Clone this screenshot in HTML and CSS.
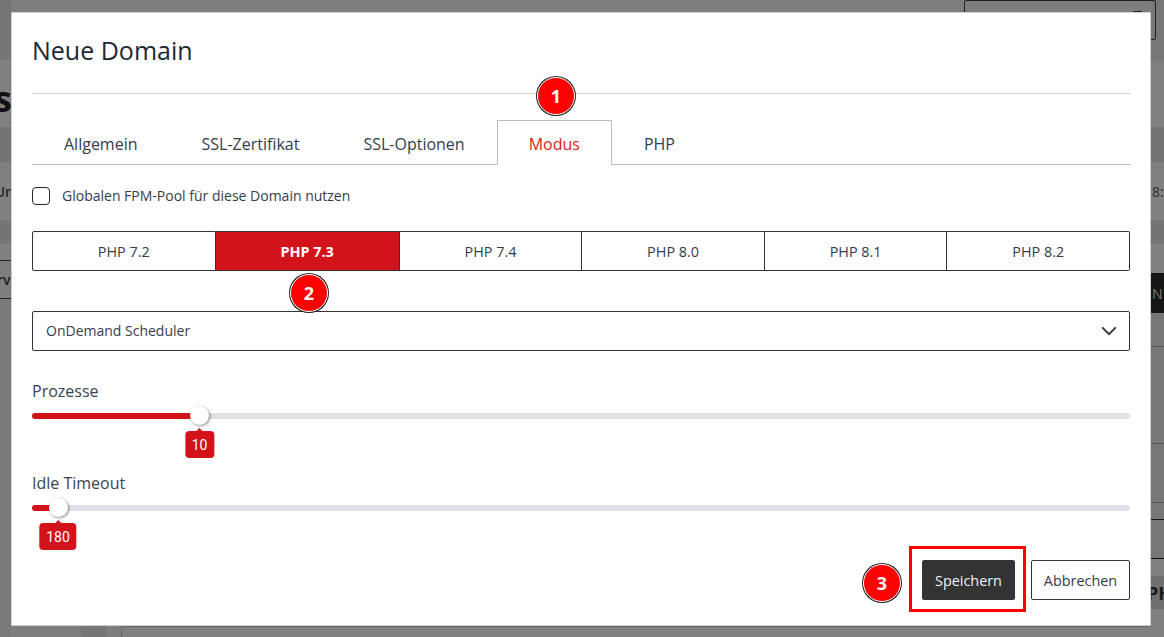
FILE: index.html
```html
<!DOCTYPE html>
<html lang="de">
<head>
<meta charset="utf-8">
<title>Neue Domain</title>
<link rel="stylesheet" href="styles.css">
</head>
<body>
<div class="backdrop">
  <div class="side side-left">
    <div class="bl b-a"><span class="big-s">s</span></div>
    <div class="bl b-b"></div>
    <div class="bl b-c"><span class="un">Un</span></div>
    <div class="bl b-d"></div>
    <div class="bl b-e"></div>
    <div class="bl b-f"><span class="rv">rve</span></div>
    <div class="bl b-g"></div>
  </div>
  <div class="center">
    <div class="top-box"><span class="top-dash"></span></div>
    <div class="bottom-strip"><span class="strip-dark"></span><span class="strip-panel"></span></div>
  </div>
  <div class="side side-right">
    <div class="br r-a"></div>
    <div class="br r-b"></div>
    <div class="br r-c"></div>
    <div class="br r-d"><span class="eight">8:</span></div>
    <div class="br r-e"></div>
    <div class="br r-f"></div>
    <div class="br r-g"><span class="n">N</span></div>
    <div class="br r-h"></div>
    <div class="br r-i"></div>
    <div class="br r-j"></div>
    <div class="br r-k"></div>
    <div class="br r-l"></div>
    <div class="br r-m"><span class="ph">PH</span></div>
    <div class="br r-n"></div>
  </div>
</div>

<div class="modal">
  <header class="modal-head"><h1 class="modal-title">Neue Domain</h1></header>
  <nav class="tabs">
    <a class="tab">Allgemein</a>
    <a class="tab">SSL-Zertifikat</a>
    <a class="tab">SSL-Optionen</a>
    <a class="tab tab-active">Modus</a>
    <a class="tab">PHP</a>
  </nav>
  <label class="check-row"><span class="check"></span><span class="check-text">Globalen FPM-Pool für diese Domain nutzen</span></label>
  <div class="btn-group">
    <button class="seg">PHP 7.2</button>
    <button class="seg seg-on">PHP 7.3</button>
    <button class="seg">PHP 7.4</button>
    <button class="seg">PHP 8.0</button>
    <button class="seg">PHP 8.1</button>
    <button class="seg">PHP 8.2</button>
  </div>
  <div class="select">
    <span class="select-text">OnDemand Scheduler</span>
    <svg class="chevron" width="16" height="10" viewBox="0 0 16 10"><path d="M1.2 1.4 8 8.2l6.8-6.8" fill="none" stroke="#343a40" stroke-width="2"/></svg>
  </div>
  <div class="field field-first">
    <div class="field-label">Prozesse</div>
    <div class="track"><div class="fill" style="width:167.5px"><span class="thumb"></span><span class="bubble">10</span></div></div>
  </div>
  <div class="field field-second">
    <div class="field-label">Idle Timeout</div>
    <div class="track"><div class="fill" style="width:26px"><span class="thumb"></span><span class="bubble">180</span></div></div>
  </div>
  <footer class="modal-foot">
    <button class="btn btn-dark">Speichern<span class="highlight"></span></button>
    <button class="btn btn-light">Abbrechen</button>
  </footer>
  <span class="badge badge-1">1</span>
  <span class="badge badge-2">2</span>
  <span class="badge badge-3">3</span>
</div>
</body>
</html>
```

FILE: styles.css
```css
* { box-sizing: border-box; }
html, body { margin: 0; height: 100%; overflow: hidden; }
body { font-family: "Open Sans", "Noto Sans", sans-serif; color: #343a40; background: #808080; }

/* dimmed page behind the dialog */
.backdrop { display: flex; height: 637px; width: 1164px; background: #7e7e7e; }
.side { overflow: hidden; flex: none; display: flex; flex-direction: column; font-weight: 600; color: #1d1f22; }
.side-left { width: 11px; background: #7c7c7c; }
.side-right { width: 13px; }
.center { flex: 1; display: flex; flex-direction: column; justify-content: space-between; min-width: 0; }

.bl, .br { flex: none; overflow: hidden; white-space: nowrap; display: flex; align-items: center; }
.bl { justify-content: flex-end; }
.b-a { height: 127px; padding-top: 70px; background: linear-gradient(#757575 60px, #808080 60px); }
.big-s { font-size: 36px; font-weight: 700; color: #111; line-height: 1; margin-right: -1px; }
.b-b { height: 35px; background: #747474; }
.b-c { height: 58px; background: #808080; }
.un { font-size: 14px; margin-right: -3px; color: #23272e; }
.b-d { height: 24px; background: #747474; }
.b-e { height: 16px; background: #808080; }
.b-f { height: 39px; border-top: 1px solid #222; border-bottom: 1px solid #222; background: #7e7e7e; justify-content: flex-start; }
.rv { font-size: 14px; margin-left: -3px; color: #1c1c1c; }
.b-g { flex: 1; background: #7a7a7a; }

.top-box { position: relative; width: 192px; height: 40px; margin: 0 -5px 0 auto; border: 1px solid #222; border-radius: 2px; display: flex; justify-content: flex-end; }
.top-dash { width: 9px; height: 1px; background: #222; margin: 10px 13px 0 0; }
.bottom-strip { display: flex; height: 11px; }
.strip-dark { width: 25px; margin-left: 70px; background: #767676; height: 11px; }
.strip-panel { flex: 1; margin-left: 15px; border-left: 1px solid #666; border-top: 1px solid #666; background: #808080; }

.br { background: #7e7e7e; }
.r-a { height: 61px; background: #777; }
.r-b { height: 66px; background: #808080; }
.r-c { height: 35px; background: #747474; }
.r-d { height: 58px; background: #808080; }
.eight { font-size: 14px; font-weight: 400; color: #2a2d33; margin-left: 1px; }
.r-e { height: 24px; background: #747474; }
.r-f { height: 29px; background: #808080; }
.r-g { height: 40px; background: #151515; }
.n { font-size: 14px; font-weight: 400; color: #777; margin-left: 1px; }
.r-h { height: 34px; background: #777; border-bottom: 1px solid #555; }
.r-i { height: 97px; background: #777; border-bottom: 1px solid #555; }
.r-j { height: 59px; background: #777; border-bottom: 1px solid #555; }
.r-k { height: 17px; background: #777; border-bottom: 1px solid #151515; }
.r-l { height: 39px; background: #777; border-bottom: 1px solid #151515; }
.r-m { height: 50px; padding-top: 17px; background: linear-gradient(#808080 17px, #707070 17px); }
.ph { font-size: 18px; font-weight: 700; color: #1a1a1a; margin-left: -4px; }
.r-n { flex: 1; background: #808080; }

/* dialog */
.modal { position: absolute; left: 11px; top: 12px; width: 1140px; height: 614px; padding: 0 20px; background: #fff; border: 1px solid #d2d2d2; border-radius: 1px; }
.modal-head { height: 81px; border-bottom: 1px solid #cfcfcf; }
.modal-title { margin: 0; padding-top: 21px; font-size: 25px; line-height: 33px; font-weight: 400; color: #212733; }

.tabs { display: flex; margin-top: 26px; height: 45px; border-bottom: 1px solid #bdbdbd; }
.tab { height: 45px; padding: 0 31px; line-height: 47px; font-size: 16px; color: #343d4b; border: 1px solid transparent; border-bottom: 0; }
.tab-active { color: #dc1c1c; background: #fff; border-color: #bdbdbd; }

.check-row { display: flex; align-items: center; gap: 12px; margin-top: 22px; height: 18px; font-size: 14px; color: #343d4b; }
.check { width: 18px; height: 18px; border: 1px solid #2b2b2b; border-radius: 4px; background: #fff; flex: none; }
.check-text { margin-top: -2px; }

.btn-group { display: flex; margin-top: 26px; height: 40px; }
.seg { flex: 1 1 auto; font: 400 14.4px "Open Sans", sans-serif; color: #343d4b; background: #fff; border: 1px solid #333; border-left-width: 0; padding: 0; }
.seg:first-child { border-left-width: 1px; border-radius: 2px 0 0 2px; }
.seg:last-child { border-radius: 0 2px 2px 0; }
.seg-on { background: #d2131a; color: #fff; font-weight: 700; }

.select { display: flex; align-items: center; justify-content: space-between; margin-top: 40px; height: 40px; padding: 0 12px 0 13px; border: 1px solid #333; border-radius: 2px; font-size: 14px; color: #343d4b; }
.select-text { margin-top: -2px; }
.chevron { display: block; }

.field-first { margin-top: 28px; }
.field-second { margin-top: 52px; }
.field-label { font-size: 16px; line-height: 24px; color: #3a4454; }
.track { height: 6px; margin-top: 10px; border-radius: 3px; background: #dee2e6; }
.fill { position: relative; height: 6px; border-radius: 3px 0 0 3px; background: #d2131a; }
.thumb { position: absolute; right: -9.5px; top: -7px; width: 19px; height: 19px; border-radius: 50%; background: #fff; box-shadow: 1px 1px 3px rgba(0,0,0,.45); }
.bubble { position: absolute; right: 0; top: 18px; transform: translateX(50%); height: 27px; padding: 0 6.5px; border-radius: 4px; background: #d2131a; color: #fff; font: 400 14px/28px "Roboto", "Open Sans", sans-serif; }
.bubble::before { content: ""; position: absolute; left: 50%; top: -3px; margin-left: -4px; border: 4px solid transparent; border-top: 0; border-bottom-color: #d2131a; }

.modal-foot { display: flex; justify-content: flex-end; gap: 16px; margin-top: 49px; }
.btn { position: relative; height: 40px; font: 400 14.4px "Open Sans", sans-serif; border-radius: 2px; padding: 0; }
.btn-dark { width: 93px; background: #333; border: 1px solid #333; color: #f2f2f2; }
.btn-light { width: 99px; background: #fff; border: 1px solid #333; color: #343d4b; }
.highlight { position: absolute; left: -14px; top: -15px; width: 117px; height: 66px; border: 3px solid #f00; }

.badge { position: absolute; width: 38px; height: 38px; display: flex; align-items: center; justify-content: center; border-radius: 50%; background: #f00; color: #fff; font-size: 18px; font-weight: 700; border: 1px solid #fff; box-shadow: 0 0 0 1px #222; }
.badge-1 { left: 525px; top: 64px; }
.badge-2 { left: 278px; top: 261px; }
.badge-3 { left: 851px; top: 551px; }
```
